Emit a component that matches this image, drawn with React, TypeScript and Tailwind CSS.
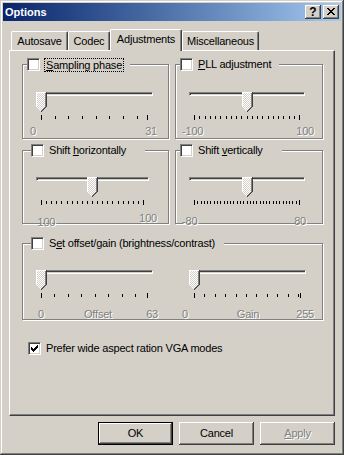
import type { ReactNode } from "react";

// pixel glyphs for the classic controls
const CHECK = ["......#", ".....##", "#...###", "##.###.", "#####..", ".###...", "..#...."];
const CLOSE = ["##....##", ".##..##.", "..####..", "...##...", "..####..", ".##..##.", "##....##"];
const THUMB = [
  "wwwwwwwwwwd",
  ...Array(14).fill("wppppppppgd"),
  ".wppppppgd.",
  "..wppppgd..",
  "...wppgd...",
  "....wgd....",
  ".....d.....",
];

const PALETTE: Record<string, string> = { "#": "#000", w: "#fff", d: "#404040", g: "#808080" };

function Pixels({ rows }: { rows: string[] }) {
  const paths: Record<string, string> = {};
  rows.forEach((row, y) =>
    row.split("").forEach((c, x) => {
      if (c === ".") return;
      const color = c === "p" ? ((x + y) % 2 ? "#d4d0c8" : "#fff") : PALETTE[c];
      paths[color] = (paths[color] ?? "") + `M${x} ${y}h1v1h-1z`;
    }),
  );
  return (
    <svg width={rows[0].length} height={rows.length} shapeRendering="crispEdges" className="block">
      {Object.entries(paths).map(([fill, d]) => (
        <path key={fill} d={d} fill={fill} />
      ))}
    </svg>
  );
}

function Check({ checked = false }: { checked?: boolean }) {
  return (
    <span className="flex items-center justify-center w-[13px] h-[13px] shrink-0 bg-white border border-t-[#808080] border-l-[#808080] border-b-white border-r-white shadow-[inset_1px_1px_#404040,inset_-1px_-1px_#d4d0c8]">
      {checked && <Pixels rows={CHECK} />}
    </span>
  );
}

function steps(min: number, max: number, step: number) {
  const out: number[] = [];
  for (let v = min; v < max; v += step) out.push(v);
  out.push(max);
  return out;
}

function Slider({
  w,
  min,
  max,
  value,
  step,
  className,
}: {
  w: number;
  min: number;
  max: number;
  value: number;
  step: number;
  className: string;
}) {
  const span = w - 11;
  const off = (v: number) => Math.round(((v - min) / (max - min)) * span);
  const vals = steps(min, max, step);
  return (
    <div className={className}>
      <div className="relative h-[20px]">
        <div className="mt-[7px] h-[4px] bg-[#d4d0c8] border border-t-[#808080] border-l-[#808080] border-b-white border-r-white shadow-[inset_1px_1px_#404040]" />
        <div className="absolute top-0" style={{ left: off(value) }}>
          <Pixels rows={THUMB} />
        </div>
      </div>
      <svg width={w} height={5} className="block mt-[3px]" shapeRendering="crispEdges">
        {vals.map((v, i) => {
          const end = i === 0 || i === vals.length - 1;
          return <rect key={i} x={5 + off(v)} y={end ? 0 : 1} width={1} height={end ? 5 : 3} fill="#000" />;
        })}
      </svg>
    </div>
  );
}

function Head({ className, children, focus }: { className: string; children: ReactNode; focus?: boolean }) {
  return (
    <div className={`flex items-center gap-[4px] h-[13px] -mt-[7px] bg-[#d4d0c8] ${className}`}>
      <Check />
      <span className={focus ? "border border-dotted border-black px-[1px] h-[14px] leading-[12px]" : "pl-[1px]"}>
        {children}
      </span>
    </div>
  );
}

const groupBox = "flex flex-col border border-[#808080] shadow-[inset_1px_1px_#fff,1px_1px_#fff]";
const dim = "text-[#808080] [text-shadow:1px_1px_0_#fff]";

function Btn({ children, def, off }: { children: ReactNode; def?: boolean; off?: boolean }) {
  return (
    <div
      className={`w-[75px] h-[23px] flex items-center justify-center bg-[#d4d0c8] ${
        def
          ? "border border-black shadow-[inset_-1px_-1px_#404040,inset_1px_1px_#fff,inset_-2px_-2px_#808080]"
          : "shadow-[inset_-1px_-1px_#404040,inset_1px_1px_#fff,inset_-2px_-2px_#808080,inset_2px_2px_#d4d0c8]"
      } ${off ? dim : ""}`}
    >
      {children}
    </div>
  );
}

function Tab({ className, children, active }: { className: string; children: ReactNode; active?: boolean }) {
  return (
    <div
      className={`${className} flex items-center justify-center bg-[#d4d0c8] border-t border-l border-white border-r border-r-[#404040] rounded-tl-[2px] rounded-tr-[2px] shadow-[inset_-1px_0_#808080] ${
        active ? "h-[22px] -mb-px relative z-10 pb-[2px]" : "h-[19px]"
      }`}
    >
      {children}
    </div>
  );
}

export default function App() {
  return (
    <div className="w-[344px] h-[455px] bg-[#d4d0c8] p-[3px] flex flex-col shadow-[inset_-1px_-1px_#404040,inset_1px_1px_#d4d0c8,inset_-2px_-2px_#808080,inset_2px_2px_#fff] font-['Liberation_Sans',Arial,sans-serif] text-[11px] leading-[13px] text-black">
      {/* title bar */}
      <div className="h-[18px] flex items-center justify-between pl-[2px] pr-[2px] bg-linear-to-r from-[#0a246a] to-[#a6caf0]">
        <span className="font-bold text-white">Options</span>
        <div className="flex gap-[2px]">
          <div className="w-[16px] h-[14px] flex items-center justify-center font-bold text-[12px] bg-[#d4d0c8] shadow-[inset_-1px_-1px_#404040,inset_1px_1px_#fff,inset_-2px_-2px_#808080]">
            ?
          </div>
          <div className="w-[16px] h-[14px] flex items-center justify-center pb-px bg-[#d4d0c8] shadow-[inset_-1px_-1px_#404040,inset_1px_1px_#fff,inset_-2px_-2px_#808080]">
            <Pixels rows={CLOSE} />
          </div>
        </div>
      </div>

      <div className="flex flex-col px-[6px] tracking-[-0.2px]">
        {/* tabs */}
        <div className="flex items-end h-[21px] mt-[8px] pl-[2px]">
          <Tab className="w-[57px]">Autosave</Tab>
          <Tab className="w-[42px]">Codec</Tab>
          <Tab className="w-[72px]" active>
            Adjustments
          </Tab>
          <Tab className="w-[77px]">Miscellaneous</Tab>
        </div>

        {/* panel */}
        <div className="h-[366px] flex flex-col pl-[12px] pt-[13px] border border-t-white border-l-white border-r-[#404040] border-b-[#404040] shadow-[inset_-1px_-1px_#808080]">
          <div className="flex gap-[6px]">
            <div className={`${groupBox} w-[147px] h-[75px]`}>
              <Head className="ml-[4px] w-[103px]" focus>
                <span className="underline">S</span>ampling phase
              </Head>
              <Slider className="ml-[13px] mt-[14px] w-[117px]" w={117} min={0} max={31} value={0} step={4} />
              <div className={`flex justify-between ml-[7px] w-[127px] mt-[5px] ${dim}`}>
                <span>0</span>
                <span>31</span>
              </div>
            </div>
            <div className={`${groupBox} w-[148px] h-[75px]`}>
              <Head className="ml-[4px] w-[99px]">
                <span className="underline">P</span>LL adjustment
              </Head>
              <Slider className="ml-[13px] mt-[14px] w-[116px]" w={116} min={-100} max={100} value={0} step={10} />
              <div className={`flex justify-between ml-[6px] w-[132px] mt-[5px] ${dim}`}>
                <span>-100</span>
                <span>100</span>
              </div>
            </div>
          </div>

          <div className="flex gap-[6px] mt-[11px]">
            <div className={`${groupBox} w-[147px] h-[74px]`}>
              <Head className="ml-[8px] w-[114px]">
                Shift <span className="underline">h</span>orizontally
              </Head>
              <Slider className="ml-[13px] mt-[13px] w-[113px]" w={113} min={-100} max={100} value={0} step={10} />
              <div className={`flex items-start justify-between ml-[11px] w-[123px] mt-[7px] ${dim}`}>
                <span className="mt-[4px]">-100</span>
                <span>100</span>
              </div>
            </div>
            <div className={`${groupBox} w-[148px] h-[74px]`}>
              <Head className="ml-[4px] w-[102px]">
                Shift <span className="underline">v</span>ertically
              </Head>
              <Slider className="ml-[13px] mt-[13px] w-[116px]" w={116} min={-80} max={80} value={0} step={5} />
              <div className={`flex justify-between ml-[6px] w-[124px] mt-[10px] ${dim}`}>
                <span>-80</span>
                <span>80</span>
              </div>
            </div>
          </div>

          <div className={`${groupBox} w-[301px] h-[77px] mt-[19px]`}>
            <Head className="ml-[8px] w-[193px]">
              S<span className="underline">e</span>t offset/gain (brightness/contrast)
            </Head>
            <div className="grid grid-cols-[153px_148px] mt-[13px]">
              <div className="flex flex-col">
                <Slider className="ml-[13px] w-[117px]" w={117} min={0} max={63} value={0} step={8} />
                <div className={`grid grid-cols-3 ml-[15px] w-[120px] mt-[10px] ${dim}`}>
                  <span>0</span>
                  <span className="text-center">Offset</span>
                  <span className="text-right">63</span>
                </div>
              </div>
              <div className="flex flex-col">
                <Slider className="ml-[13px] w-[117px]" w={117} min={0} max={255} value={0} step={25} />
                <div className={`grid grid-cols-3 ml-[6px] w-[132px] mt-[10px] ${dim}`}>
                  <span>0</span>
                  <span className="text-center">Gain</span>
                  <span className="text-right">255</span>
                </div>
              </div>
            </div>
          </div>

          <div className="flex items-center gap-[5px] ml-[6px] mt-[22px]">
            <Check checked />
            <span>Prefer wide aspect ration VGA modes</span>
          </div>
        </div>

        {/* buttons */}
        <div className="flex justify-end gap-[6px] mt-[6px]">
          <Btn def>OK</Btn>
          <Btn>Cancel</Btn>
          <Btn off>
            <span>
              <span className="underline">A</span>pply
            </span>
          </Btn>
        </div>
      </div>
    </div>
  );
}
